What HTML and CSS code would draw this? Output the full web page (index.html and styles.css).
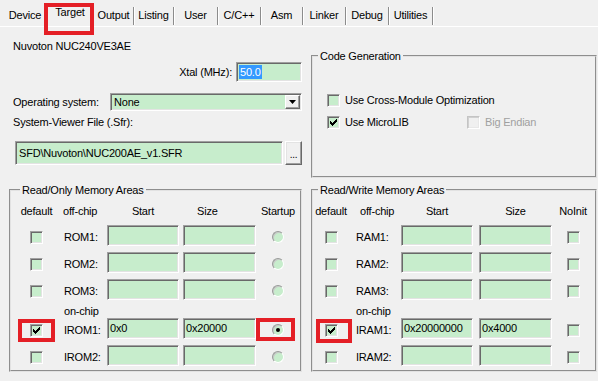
FILE: index.html
```html
<!DOCTYPE html>
<html>
<head>
<meta charset="utf-8">
<link rel="stylesheet" href="styles.css">
</head>
<body>
<div class="tabs">
  <div class="tab t-device">Device</div>
  <div class="tab t-target active hl">Target</div>
  <div class="tab t-output">Output</div>
  <div class="tab t-listing">Listing</div>
  <div class="tab t-user">User</div>
  <div class="tab t-cpp">C/C++</div>
  <div class="tab t-asm">Asm</div>
  <div class="tab t-linker">Linker</div>
  <div class="tab t-debug">Debug</div>
  <div class="tab t-util">Utilities</div>
</div>
<div class="panel">
  <div class="device">
    <div class="title">Nuvoton NUC240VE3AE</div>
    <div class="xtal">
      <span>Xtal (MHz):</span>
      <div class="field xtal-field"><span class="sel">50.0</span></div>
    </div>
    <div class="os">
      <span>Operating system:</span>
      <div class="field combo">
        <span class="combo-text">None</span>
        <span class="combo-btn"><svg width="7" height="4" viewBox="0 0 7 4"><polygon points="0,0 7,0 3.5,4" fill="#000"/></svg></span>
      </div>
    </div>
    <div class="sfr-label">System-Viewer File (.Sfr):</div>
    <div class="sfr">
      <div class="field sfr-field">SFD\Nuvoton\NUC200AE_v1.SFR</div>
      <div class="btn dots">...</div>
    </div>
  </div>

  <fieldset class="group codegen">
    <legend>Code Generation</legend>
    <div class="cg-body">
      <div class="cg-row">
        <span class="cg-item"><span class="chk"></span><span>Use Cross-Module Optimization</span></span>
      </div>
      <div class="cg-row">
        <span class="cg-item cg-first"><span class="chk"><svg class="tick" width="7" height="7" viewBox="0 0 7 7"><path d="M0 2h1v1h1v1h1v-1h1v-1h1v-1h1v-1h1v3h-1v1h-1v1h-1v1h-1v1h-1v-1h-1v-1h-1z" fill="#000"/></svg></span><span>Use MicroLIB</span></span>
        <span class="cg-item disabled"><span class="chk off"></span><span>Big Endian</span></span>
      </div>
    </div>
  </fieldset>

  <fieldset class="group mem rom">
    <legend>Read/Only Memory Areas</legend>
    <div class="memgrid">
      <div class="h h-default">default</div>
      <div class="h h-off">off-chip</div>
      <div class="h h-start">Start</div>
      <div class="h h-size">Size</div>
      <div class="h h-last">Startup</div>

      <div class="cc"><span class="chk"></span></div>
      <div class="lbl">ROM1:</div>
      <div class="field mf"></div>
      <div class="field mf mf2"></div>
      <div class="cc"><span class="radio"></span></div>

      <div class="cc"><span class="chk"></span></div>
      <div class="lbl">ROM2:</div>
      <div class="field mf"></div>
      <div class="field mf mf2"></div>
      <div class="cc"><span class="radio"></span></div>

      <div class="cc"><span class="chk"></span></div>
      <div class="lbl">ROM3:</div>
      <div class="field mf"></div>
      <div class="field mf mf2"></div>
      <div class="cc"><span class="radio"></span></div>

      <div class="onchip">on-chip</div>

      <div class="cc"><span class="chk hl hl-l"><svg class="tick" width="7" height="7" viewBox="0 0 7 7"><path d="M0 2h1v1h1v1h1v-1h1v-1h1v-1h1v-1h1v3h-1v1h-1v1h-1v1h-1v1h-1v-1h-1v-1h-1z" fill="#000"/></svg></span></div>
      <div class="lbl">IROM1:</div>
      <div class="field mf">0x0</div>
      <div class="field mf mf2">0x20000</div>
      <div class="cc"><span class="radio on hl hl-r"></span></div>

      <div class="cc"><span class="chk"></span></div>
      <div class="lbl">IROM2:</div>
      <div class="field mf"></div>
      <div class="field mf mf2"></div>
      <div class="cc"><span class="radio"></span></div>
    </div>
  </fieldset>

  <fieldset class="group mem ram">
    <legend>Read/Write Memory Areas</legend>
    <div class="memgrid">
      <div class="h h-default">default</div>
      <div class="h h-off">off-chip</div>
      <div class="h h-start">Start</div>
      <div class="h h-size">Size</div>
      <div class="h h-last">NoInit</div>

      <div class="cc"><span class="chk"></span></div>
      <div class="lbl">RAM1:</div>
      <div class="field mf"></div>
      <div class="field mf mf2"></div>
      <div class="cc"><span class="chk"></span></div>

      <div class="cc"><span class="chk"></span></div>
      <div class="lbl">RAM2:</div>
      <div class="field mf"></div>
      <div class="field mf mf2"></div>
      <div class="cc"><span class="chk"></span></div>

      <div class="cc"><span class="chk"></span></div>
      <div class="lbl">RAM3:</div>
      <div class="field mf"></div>
      <div class="field mf mf2"></div>
      <div class="cc"><span class="chk"></span></div>

      <div class="onchip">on-chip</div>

      <div class="cc"><span class="chk hl hl-rr"><svg class="tick" width="7" height="7" viewBox="0 0 7 7"><path d="M0 2h1v1h1v1h1v-1h1v-1h1v-1h1v-1h1v3h-1v1h-1v1h-1v1h-1v1h-1v-1h-1v-1h-1z" fill="#000"/></svg></span></div>
      <div class="lbl">IRAM1:</div>
      <div class="field mf">0x20000000</div>
      <div class="field mf mf2">0x4000</div>
      <div class="cc"><span class="chk"></span></div>

      <div class="cc"><span class="chk"></span></div>
      <div class="lbl">IRAM2:</div>
      <div class="field mf"></div>
      <div class="field mf mf2"></div>
      <div class="cc"><span class="chk"></span></div>
    </div>
  </fieldset>
</div>
</body>
</html>
```

FILE: styles.css
```css
* { box-sizing: border-box; }
html, body { margin: 0; padding: 0; }
body {
  width: 598px;
  height: 381px;
  overflow: hidden;
  background: #f0f0f0;
  color: #000;
  font-family: "Liberation Sans", Arial, sans-serif;
  font-size: 11px;
  line-height: 14px;
  letter-spacing: -0.2px;
}

/* ---------- tabs ---------- */
.tabs {
  display: flex;
  align-items: flex-end;
  height: 27px;
  padding-left: 4px;
  border-bottom: 1px solid #ffffff;
}
.tab {
  height: 18px;
  line-height: 17px;
  text-align: center;
  border-right: 1px solid #8c8c8c;
  box-shadow: 1px 0 0 #ffffff;
  margin-bottom: 1px;
  white-space: nowrap;
}
.tab.active {
  height: 21px;
  line-height: 15px;
  border-right: none;
  box-shadow: none;
  margin-bottom: 0;
  position: relative;
}
.t-device { width: 42px; border-right: none; box-shadow: none; }
.t-target { width: 48px; }
.t-output { width: 40px; }
.t-listing { width: 40px; }
.t-user { width: 44px; }
.t-cpp { width: 43px; }
.t-asm { width: 42px; }
.t-linker { width: 43px; }
.t-debug { width: 43px; }
.t-util { width: 44px; }

/* ---------- red highlight annotations ---------- */
.hl { position: relative; }
.hl::after {
  content: "";
  position: absolute;
  border: 4px solid #e41f26;
}
.t-target.hl::after { left: -2px; right: 0; top: -2px; bottom: -9px; }
.hl-l::after { left: -13px; right: -13px; top: -6px; bottom: -6px; }
.hl-r::after { left: -17px; right: -12px; top: -7px; bottom: -6px; }
.hl-rr::after { left: -10px; right: -15px; top: -6px; bottom: -7px; }

/* ---------- panel layout ---------- */
.panel {
  display: grid;
  grid-template-columns: 305px 286px;
  grid-template-rows: 156px 189px;
  column-gap: 6px;
}

/* ---------- common controls ---------- */
.field {
  background: #c7edcc;
  border-style: solid;
  border-width: 1px;
  border-color: #a0a0a0 #ffffff #ffffff #a0a0a0;
  box-shadow: inset 1px 1px 0 #696969, inset -1px -1px 0 #e3e3e3;
  white-space: nowrap;
  overflow: hidden;
}
.btn {
  background: #f0f0f0;
  border-style: solid;
  border-width: 1px;
  border-color: #ffffff #696969 #696969 #ffffff;
  box-shadow: inset -1px -1px 0 #a0a0a0, inset 1px 1px 0 #e3e3e3;
}
.chk {
  display: inline-flex;
  align-items: center;
  justify-content: center;
  width: 13px;
  height: 13px;
  flex: none;
  background: #c7edcc;
  border-style: solid;
  border-width: 1px;
  border-color: #a0a0a0 #ffffff #ffffff #a0a0a0;
  box-shadow: inset 1px 1px 0 #696969, inset -1px -1px 0 #e3e3e3;
}
.chk.off {
  background: #f0f0f0;
  border-color: #c4c4c4 #ffffff #ffffff #c4c4c4;
  box-shadow: inset 1px 1px 0 #d0d0d0, inset -1px -1px 0 #e8e8e8;
}
.tick { display: block; }
.radio {
  display: inline-flex;
  align-items: center;
  justify-content: center;
  width: 12px;
  height: 12px;
  border-radius: 50%;
  background: #c7edcc;
  border: 1px solid;
  border-color: #9a9a9a #ffffff #ffffff #9a9a9a;
  box-shadow: inset 1px 1px 0 #c8c8c8;
}
.radio.on::before {
  content: "";
  width: 4px;
  height: 4px;
  border-radius: 50%;
  background: #000;
}

/* ---------- device column ---------- */
.device {
  padding: 12px 3px 0 13px;
}
.title { height: 14px; }
.xtal {
  display: flex;
  justify-content: flex-end;
  align-items: center;
  gap: 4px;
  margin-top: 9px;
}
.xtal-field {
  width: 66px;
  height: 20px;
  padding: 2px 0 0 2px;
  line-height: 14px;
}
.sel {
  display: inline-block;
  background: #3399ff;
  color: #ffffff;
  padding: 0 1px;
}
.os {
  display: flex;
  align-items: center;
  margin-top: 11px;
}
.combo {
  margin-left: auto;
  width: 192px;
  height: 18px;
  display: flex;
  align-items: center;
  padding: 0 1px 0 3px;
}
.combo-text { flex: 1; }
.combo-btn {
  width: 15px;
  height: 14px;
  display: flex;
  align-items: center;
  justify-content: center;
  background: #f0f0f0;
  border-style: solid;
  border-width: 1px;
  border-color: #ffffff #696969 #696969 #ffffff;
  box-shadow: inset -1px -1px 0 #a0a0a0;
}
.sfr-label { margin-top: 4px; }
.sfr {
  display: flex;
  gap: 2px;
  margin-top: 12px;
  padding-left: 2px;
}
.sfr-field {
  width: 268px;
  height: 24px;
  padding: 4px 0 0 3px;
}
.dots {
  width: 17px;
  height: 24px;
  text-align: center;
  line-height: 26px;
  font-size: 10px;
}

/* ---------- group boxes ---------- */
.group {
  margin: 0;
  padding: 0;
  min-width: 0;
  border: 2px groove #e2e2e2;
}
.group legend {
  padding: 0 2px;
  margin-left: 5px;
  line-height: 14px;
}
.rom legend { margin-left: 9px; }
.codegen {
  margin-top: 22px;
  height: 129px;
}
.cg-body {
  padding: 29px 0 0 14px;
}
.cg-row {
  display: flex;
  align-items: center;
  height: 16px;
  margin-bottom: 6px;
}
.cg-item {
  display: flex;
  align-items: center;
  gap: 5px;
}
.cg-first { width: 140px; }
.disabled { color: #a0a0a0; }

/* ---------- memory areas ---------- */
.rom { margin-left: 9px; width: 293px; }
.mem { height: 189px; }
.memgrid {
  display: grid;
  grid-template-rows: 21px 27px 27px 27px 12px 27px 25px;
  align-items: start;
  padding-top: 7px;
}
.rom .memgrid {
  grid-template-columns: 43px 49px 76px 76px 38px;
  padding-left: 4px;
}
.ram .memgrid {
  grid-template-columns: 30px 55px 78px 76px 36px;
  padding-left: 3px;
}
.h { white-space: nowrap; }
.h-default, .h-last { justify-self: center; }
.h-start { width: 72px; text-align: center; }
.rom .h-off { padding-left: 5px; }
.ram .h-off { padding-left: 14px; }
.rom .h-size { padding-left: 14px; }
.ram .h-size { width: 73px; text-align: center; }
.cc {
  justify-self: center;
  padding-top: 6px;
  display: flex;
}
.lbl { padding-top: 5px; }
.rom .lbl { padding-left: 6px; }
.ram .lbl { padding-left: 10px; }
.mf {
  width: 72px;
  height: 21px;
  padding: 2px 0 0 2px;
}
.mf2 { width: 73px; }
.onchip {
  grid-column: 2 / span 4;
  line-height: 12px;
  margin-top: -1px;
}
.rom .onchip { padding-left: 6px; }
.ram .onchip { padding-left: 10px; }
```
